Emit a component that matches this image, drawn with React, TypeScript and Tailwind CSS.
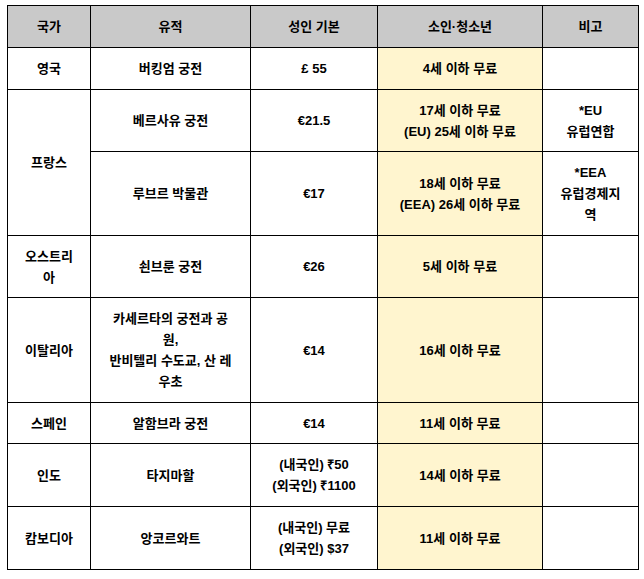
import React from "react";

type Row = {
    country?: { text: React.ReactNode; rowSpan?: number };
    site: React.ReactNode;
    adult: React.ReactNode;
    child: React.ReactNode;
    note: React.ReactNode;
    h: string;
};

const rows: Row[] = [
    { country: { text: "영국" }, site: "버킹엄 궁전", adult: "£ 55", child: "4세 이하 무료", note: "", h: "h-[42px]" },
    {
        country: { text: "프랑스", rowSpan: 2 },
        site: "베르사유 궁전",
        adult: "€21.5",
        child: <>17세 이하 무료<br />(EU) 25세 이하 무료</>,
        note: <>*EU<br />유럽연합</>,
        h: "h-[62px]",
    },
    {
        site: "루브르 박물관",
        adult: "€17",
        child: <>18세 이하 무료<br />(EEA) 26세 이하 무료</>,
        note: <>*EEA<br />유럽경제지<br />역</>,
        h: "h-[84px]",
    },
    { country: { text: <>오스트리<br />아</> }, site: "쇤브룬 궁전", adult: "€26", child: "5세 이하 무료", note: "", h: "h-[62px]" },
    {
        country: { text: "이탈리아" },
        site: <>카세르타의 궁전과 공<br />원,<br />반비텔리 수도교, 산 레<br />우초</>,
        adult: "€14",
        child: "16세 이하 무료",
        note: "",
        h: "h-[105px]",
    },
    { country: { text: "스페인" }, site: "알함브라 궁전", adult: "€14", child: "11세 이하 무료", note: "", h: "h-[41px]" },
    {
        country: { text: "인도" },
        site: "타지마할",
        adult: <>(내국인) ₹50<br />(외국인) ₹1100</>,
        child: "14세 이하 무료",
        note: "",
        h: "h-[63px]",
    },
    {
        country: { text: "캄보디아" },
        site: "앙코르와트",
        adult: <>(내국인) 무료<br />(외국인) $37</>,
        child: "11세 이하 무료",
        note: "",
        h: "h-[63px]",
    },
];

const cell = "border border-black text-center align-middle px-1 whitespace-nowrap";

export default function App() {
    return (
        <div className="w-[644px] h-[579px] bg-white pt-[5px] pl-[7px]">
            <table
                className="table-fixed border-collapse w-[631px] text-[13px] leading-[21px] font-bold text-black"
                style={{ fontFamily: '"Liberation Sans", "Noto Sans CJK KR", sans-serif' }}
            >
                <colgroup>
                    <col className="w-[83px]" />
                    <col className="w-[160px]" />
                    <col className="w-[127px]" />
                    <col className="w-[165px]" />
                    <col className="w-[96px]" />
                </colgroup>
                <thead>
                    <tr className="h-[42px] bg-[#c9c9c9]">
                        <th className={cell}>국가</th>
                        <th className={cell}>유적</th>
                        <th className={cell}>성인 기본</th>
                        <th className={cell}>소인·청소년</th>
                        <th className={cell}>비고</th>
                    </tr>
                </thead>
                <tbody>
                    {rows.map((r, i) => (
                        <tr key={i} className={r.h}>
                            {r.country && (
                                <td className={cell} rowSpan={r.country.rowSpan}>
                                    {r.country.text}
                                </td>
                            )}
                            <td className={cell}>{r.site}</td>
                            <td className={cell}>{r.adult}</td>
                            <td className={`${cell} bg-[#fff5cf]`}>{r.child}</td>
                            <td className={cell}>{r.note}</td>
                        </tr>
                    ))}
                </tbody>
            </table>
        </div>
    );
}
